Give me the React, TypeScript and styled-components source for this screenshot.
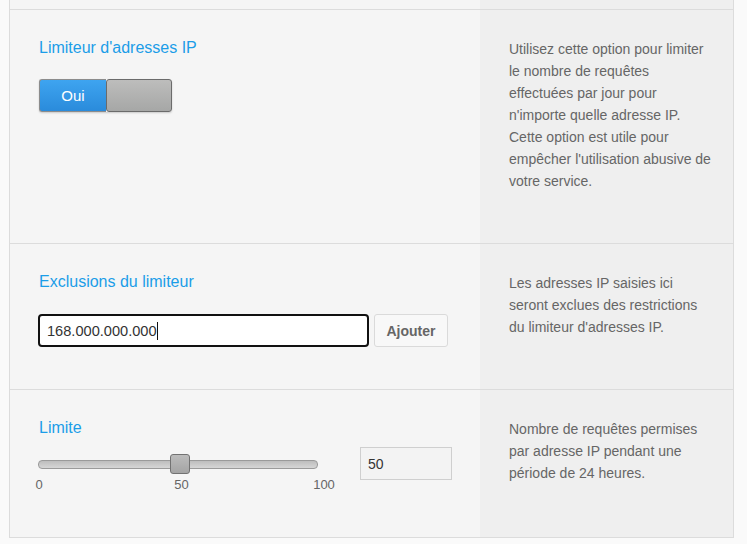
import React from "react"
import styled, { createGlobalStyle } from "styled-components"

const GlobalStyle = createGlobalStyle`
  html, body {
    margin: 0;
    padding: 0;
    background: #fafafa;
    font-family: "Liberation Sans", Arial, sans-serif;
  }
`

const Page = styled.div`
  padding: 0 14px 7px 9px;
`

const Panel = styled.div`
  width: 725px;
  box-sizing: border-box;
  border: 1px solid #dcdcdc;
  border-top: none;
`

const Row = styled.section<{ $stub?: boolean }>`
  display: grid;
  grid-template-columns: 470px 253px;
  height: ${({ $stub }) => ($stub ? "9px" : "auto")};
  & + & {
    border-top: 1px solid #dcdcdc;
  }
`

const Main = styled.div<{ $stub?: boolean }>`
  background: #f5f5f5;
  padding: ${({ $stub }) => ($stub ? "0" : "28px 0 42px 29px")};
`

const Aside = styled.div<{ $stub?: boolean }>`
  background: #efefef;
  padding: ${({ $stub }) => ($stub ? "0" : "28px 18px 51px 29px")};
  font-size: 14px;
  line-height: 22px;
  color: #666;
`

const Title = styled.h3`
  margin: 0;
  font-size: 16px;
  line-height: 20px;
  font-weight: normal;
  color: #1b9de8;
`

const Toggle = styled.div`
  display: flex;
  width: fit-content;
  margin-top: 21px;
  height: 33px;
  box-shadow: 0 1px 2px rgba(0, 0, 0, 0.18);
  border-radius: 3px;
`

const ToggleOn = styled.span`
  width: 67px;
  box-sizing: border-box;
  display: flex;
  align-items: center;
  justify-content: center;
  border: 1px solid #8c8c8c;
  border-right: none;
  border-radius: 3px 0 0 3px;
  background: linear-gradient(#3ea4f0, #2a8bdb);
  color: #fff;
  font-size: 15px;
`

const ToggleHandle = styled.span`
  width: 66px;
  box-sizing: border-box;
  border: 1px solid #6b6b6b;
  border-radius: 3px;
  background: linear-gradient(#bdbdbc, #a6a7a6);
`

const FieldRow = styled.div`
  display: flex;
  gap: 5px;
  margin: 22px 0 0 -1px;
`

const TextBox = styled.div`
  width: 331px;
  height: 33px;
  box-sizing: border-box;
  border: 2px solid #111;
  border-radius: 4px;
  background: #fff;
  padding: 0 7px;
  display: flex;
  align-items: center;
  font-size: 14.6px;
  color: #333;
`

const Caret = styled.span`
  display: inline-block;
  width: 1px;
  height: 18px;
  background: #111;
`

const Button = styled.button`
  width: 74px;
  height: 33px;
  box-sizing: border-box;
  border: 1px solid #dadada;
  border-radius: 3px;
  background: #f8f8f8;
  color: #666;
  font-family: inherit;
  font-size: 14px;
  font-weight: bold;
  padding: 0;
`

const SliderRow = styled.div`
  display: flex;
  align-items: flex-start;
  margin: 9px 0 2px -1px;
`

const Slider = styled.div`
  width: 287px;
  padding-top: 7px;
`

const Track = styled.div`
  position: relative;
  width: 280px;
  height: 9px;
  margin-top: 6px;
  box-sizing: border-box;
  border: 1px solid #9a9a9a;
  border-radius: 4px;
  background: linear-gradient(#bdbdbd, #d6d6d6);
`

const Thumb = styled.span`
  position: absolute;
  top: -7px;
  width: 20px;
  height: 20px;
  box-sizing: border-box;
  border: 1px solid #727272;
  border-radius: 3px;
  background: linear-gradient(#bcbcbc, #a4a4a4);
  transform: translateX(-50%);
`

const Scale = styled.div`
  position: relative;
  margin: 8px 0 0 1px;
  width: 285px;
  height: 16px;
`

const Tick = styled.span`
  position: absolute;
  top: 0;
  transform: translateX(-50%);
  font-size: 13px;
  line-height: 16px;
  color: #666;
`

const NumberBox = styled.div`
  width: 92px;
  height: 33px;
  margin-left: 35px;
  box-sizing: border-box;
  border: 1px solid #cfcfcf;
  background: #f3f3f3;
  padding: 0 7px;
  display: flex;
  align-items: center;
  font-size: 14px;
  color: #333;
`

const limit = { min: 0, max: 100, value: 50 }
const ticks = [0, 50, 100]

const App = () => {
  const pct = ((limit.value - limit.min) / (limit.max - limit.min)) * 100

  return (
    <Page>
      <GlobalStyle />
      <Panel>
        <Row $stub>
          <Main $stub />
          <Aside $stub />
        </Row>

        <Row>
          <Main>
            <Title>Limiteur d'adresses IP</Title>
            <Toggle>
              <ToggleOn>Oui</ToggleOn>
              <ToggleHandle />
            </Toggle>
          </Main>
          <Aside>
            Utilisez cette option pour limiter le nombre de requêtes effectuées
            par jour pour n'importe quelle adresse IP. Cette option est utile
            pour empêcher l'utilisation abusive de votre service.
          </Aside>
        </Row>

        <Row>
          <Main>
            <Title>Exclusions du limiteur</Title>
            <FieldRow>
              <TextBox>
                168.000.000.000
                <Caret />
              </TextBox>
              <Button>Ajouter</Button>
            </FieldRow>
          </Main>
          <Aside>
            Les adresses IP saisies ici seront exclues des restrictions du
            limiteur d'adresses IP.
          </Aside>
        </Row>

        <Row>
          <Main>
            <Title>Limite</Title>
            <SliderRow>
              <Slider>
                <Track>
                  <Thumb style={{ left: `calc(${pct}% + 2px)` }} />
                </Track>
                <Scale>
                  {ticks.map((t) => (
                    <Tick key={t} style={{ left: `${t}%` }}>
                      {t}
                    </Tick>
                  ))}
                </Scale>
              </Slider>
              <NumberBox>{limit.value}</NumberBox>
            </SliderRow>
          </Main>
          <Aside>
            Nombre de requêtes permises par adresse IP pendant une période de
            24 heures.
          </Aside>
        </Row>
      </Panel>
    </Page>
  )
}

export default App
